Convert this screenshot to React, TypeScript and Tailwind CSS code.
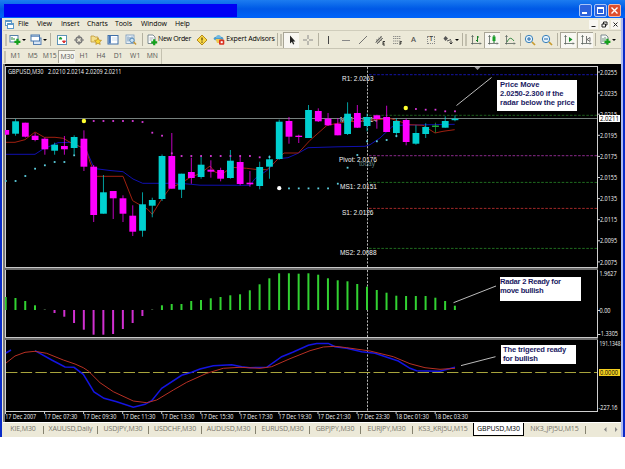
import type { ReactNode } from "react";
import clsx from "clsx";

const STEP = 9.765;
const X0 = 5.8;
const barX = (i: number) => X0 + i * STEP;

const UP = "#00d0d0";
const DOWN = "#ff00ff";

// [body top, body bottom, wick top, wick bottom, direction]
type Candle = [number, number, number, number, "u" | "d" | "x"];

const candles: Candle[] = [
  [130, 134.7, 130, 134.7, "d"],
  [121.3, 133.7, 119, 135.7, "u"],
  [122.7, 136.7, 122.7, 137.5, "d"],
  [135.7, 140, 133, 141.3, "d"],
  [138.7, 149.3, 137.5, 154.7, "d"],
  [144.7, 150.7, 142.7, 154.7, "u"],
  [146, 149.3, 136, 154.7, "d"],
  [137, 148, 135.3, 154.5, "u"],
  [138.7, 166.7, 130.3, 171, "d"],
  [166.7, 215, 165, 222, "d"],
  [192.3, 213.7, 175, 213.7, "u"],
  [191, 198.3, 191, 219, "d"],
  [198.3, 213.7, 195.3, 222, "d"],
  [215.7, 231.7, 205.3, 236, "d"],
  [204.3, 230.7, 192.3, 236.7, "u"],
  [200, 205.7, 197.7, 217.3, "u"],
  [156, 199, 154.5, 201, "u"],
  [156, 188.7, 133, 188.7, "d"],
  [173.7, 189.7, 173.7, 198, "u"],
  [172, 178, 157.7, 183.7, "d"],
  [164.7, 177, 156.3, 178.7, "u"],
  [169.7, 171.7, 160.3, 177.7, "d"],
  [170, 178.7, 167.7, 181.3, "d"],
  [160.7, 178, 150, 178.7, "u"],
  [162, 184, 156.3, 185.3, "d"],
  [182.7, 184.3, 171, 186.7, "d"],
  [167, 186, 161.7, 189.3, "u"],
  [159.3, 166.7, 155.3, 178.7, "u"],
  [121.7, 159, 119.7, 159.7, "u"],
  [121, 136.7, 117, 143.7, "d"],
  [135.7, 137, 134.7, 143, "d"],
  [110, 138, 105, 138, "u"],
  [111, 121.3, 108.3, 122, "d"],
  [118.7, 125.3, 113, 126, "d"],
  [123.7, 135.3, 118, 135.3, "d"],
  [113.7, 134, 102.3, 135, "u"],
  [113, 127.7, 105, 128, "d"],
  [117, 126, 113.7, 131.3, "u"],
  [115.3, 119, 114.7, 128.7, "d"],
  [117, 132, 105.7, 132, "d"],
  [121, 133, 118.3, 137.3, "u"],
  [120, 142, 118.7, 145.3, "d"],
  [133, 143.7, 125.3, 144.7, "u"],
  [127, 134, 123.3, 138, "u"],
  [125.5, 127, 122.7, 132.7, "x"],
  [121, 127.7, 116.3, 127.7, "u"],
  [118.7, 120.2, 115.3, 121.3, "u"],
];

const candleColor = { u: UP, d: DOWN, x: "#1fa83c" };

const radar = [
  297, 298, 301, 305.3, 309.3, 313, 316.7, 323, 329.7, 334.7, 334.7, 334, 329, 323, 316, 309.3,
  305.3, 304, 304, 301, 300, 298.3, 297, 295.3, 294.3, 290.3, 284.3, 278.3, 273.3, 273.3, 273.7,
  273.3, 274.7, 278.3, 280.3, 281.3, 284, 286.7, 290, 292.7, 295.7, 296, 296, 296, 297.7, 301, 305.7,
];

// trailing dots: [bar index, y]
const magentaDots = [
  [9, 121], [10, 121], [11, 121], [12, 121], [13, 121], [14, 122], [15, 132.7], [16, 135.7],
  [17, 153.3], [18, 156], [19, 156], [20, 156], [21, 156], [22, 156], [23, 156], [24, 156],
  [25, 156], [26, 157.3], [42, 109], [43, 109.7], [44, 109.7], [45, 111.3], [46, 111.3],
];
const cyanDots = [
  [0, 181], [1, 181], [2, 176], [3, 168.7], [4, 165.3], [5, 162], [6, 162], [7, 155.3],
  [27, 157], [29, 188.4], [30, 188.4], [31, 188.4], [32, 188.4], [33, 188.4], [34, 183.7],
  [35, 167.7], [36, 155], [37, 141.3], [38, 141.3], [39, 140], [40, 136],
];

const pivots = [
  { y: 74.7, color: "#1414a8", label: "R1: 2.0263", x: 342, w: 31.5, base: 81 },
  { y: 115.3, color: "#1c5c1c", label: "MR1: 2.0214", x: 340, w: 37, base: 121.6 },
  { y: 155.7, color: "#8c2a8c", label: "Pivot: 2.0176", x: 339, w: 38, base: 162.4 },
  { y: 182.4, color: "#1f6b1f", label: "MS1: 2.0151", x: 340, w: 37, base: 188.8 },
  { y: 208.4, color: "#a02828", label: "S1: 2.0126", x: 342, w: 31.5, base: 215 },
  { y: 248.4, color: "#1f6b1f", label: "MS2: 2.0088", x: 340, w: 36.5, base: 255.3 },
];

const prices = [
  "2.0255", "2.0235", "2.0215", "2.0195", "2.0175", "2.0155", "2.0135", "2.0115", "2.0095", "2.0075",
];

const times = [
  "17 Dec 2007", "17 Dec 07:30", "17 Dec 09:30", "17 Dec 11:30", "17 Dec 13:30", "17 Dec 15:30",
  "17 Dec 17:30", "17 Dec 19:30", "17 Dec 21:30", "17 Dec 23:30", "18 Dec 01:30", "18 Dec 03:30",
];

const Label = ({ x, y, w, children, fill = "#f4f4f4", font = "Open Sans", size = 7 }: {
  x: number; y: number; w: number; children: string; fill?: string; font?: string; size?: number;
}) => (
  <text x={x} y={y} textLength={w} lengthAdjust="spacingAndGlyphs" fill={fill} fontFamily={`"${font}", sans-serif`} fontSize={size}>
    {children}
  </text>
);

const DayLine = ({ from, to }: { from: number; to: number }) => (
  <line x1="367.5" x2="367.5" y1={from} y2={to} stroke="#b4b4b4" strokeWidth="1" strokeDasharray="2.2 1.4" />
);

const Axis = ({ from, to }: { from: number; to: number }) => (
  <path d={`M597.5 ${from}V${to}M5.5 ${from}V${to}`} stroke="#d0d0d0" strokeWidth="1" />
);

function PricePanel() {
  return (
    <svg className="block h-[203px] w-[616px] overflow-hidden" viewBox="5 64 616 203" fill="none">
      <path d="M5 66.5H598" stroke="#d0d0d0" />
      <Axis from={66} to={267} />
      <path d="M474.5 67h6l-3 3z" fill="#9a9a9a" />
      {pivots.map((p) => (
        <line key={p.label} x1="369" x2="597" y1={p.y} y2={p.y} stroke={p.color} strokeDasharray="2.6 1.5" />
      ))}
      {pivots.map((p) => (
        <Label key={p.label} x={p.x} y={p.base} w={p.w} font="Liberation Sans">{p.label}</Label>
      ))}
      <Label x={359} y={166} w={16} fill="#5f8080" font="Liberation Sans">today</Label>
      <DayLine from={67} to={267} />
      <path d="M6 118.5H597" stroke="#76807e" />
      <polyline
        stroke="#1010b0"
        points="6,154.3 35,154.3 42.7,149.3 58,142.7 70,142.3 86,149.3 94.3,168.5 110,170.5 123,171.7 133,179 142.7,183.3 180,183.3 190,184.2 200,185.2 250,185.3 255,178.7 268,169.7 278,158.7 288,157.7 298,153.3 308,147.7 338,146.8 365,146.3 370,144.7 380,138 391.7,127 397,125.3 454.7,124.3"
      />
      <polyline
        stroke="#a02010"
        points="6,142.3 15,142.3 25,139.7 35,132 44.3,137.3 55,137.3 63.3,138.3 70,142.3 86,149.3 90,162 96,176.3 123,176.3 132.7,200.7 147.7,209.3 152.3,214.3 161.3,199.7 170,188 180,183.7 191,177 200,173.7 210,166 215,172 222,174 231.7,167.3 246.7,168.3 255,169.3 267,169.7 275,162 284,153 298.3,153 310,140.3 327,125.3 345,122 391,118.7 397,120.7 410,124.7 423,125.3 435,133 443,131.3 454.7,129.7"
      />
      {candles.map(([top, bottom, hi, lo, dir], i) => (
        <g key={i} fill={candleColor[dir]}>
          <rect x={barX(i) - 0.5} y={hi} width="1" height={lo - hi} opacity="0.75" />
          <rect x={barX(i) - 3.4} y={top} width="6.8" height={bottom - top} />
        </g>
      ))}
      {magentaDots.map(([i, y]) => (
        <rect key={i} x={barX(i) - 0.9} y={y - 0.9} width="1.8" height="1.8" fill="#d838d8" />
      ))}
      {cyanDots.map(([i, y]) => (
        <rect key={i} x={barX(i) - 0.9} y={y - 0.9} width="1.8" height="1.8" fill="#5cd0e0" />
      ))}
      <circle cx={barX(8)} cy="121" r="2.2" fill="#ffff30" />
      <circle cx={barX(41) - 0.4} cy="108" r="2.2" fill="#ffff30" />
      <circle cx={barX(28)} cy="188.2" r="2.1" fill="#fff" />
      <path d="M456.5 105.5L491.5 77.5" stroke="#d0d0d0" strokeWidth="0.9" />
      <Label x={8} y={73.8} w={35.5}>GBPUSD,M30</Label>
      <Label x={48} y={73.8} w={73.5}>2.0210 2.0214 2.0209 2.0211</Label>
      {prices.map((p, i) => (
        <g key={p}>
          <path d={`M598 ${72 + i * 21.1}h2`} stroke="#d0d0d0" />
          <Label x={600} y={74.6 + i * 21.1} w={17}>{p}</Label>
        </g>
      ))}
      <rect x="599" y="115" width="21" height="7" fill="#fff" />
      <Label x={600} y={121.2} w={19} fill="#000">2.0211</Label>
    </svg>
  );
}

function RadarPanel() {
  return (
    <svg className="block h-[67px] w-[616px] overflow-hidden" viewBox="5 270 616 67" fill="none">
      <Axis from={270} to={337} />
      <DayLine from={270} to={337} />
      {radar.map((y, i) => {
        const tiny = Math.abs(y - 310) < 1;
        return (
          <rect
            key={i}
            x={barX(i) - 1.1}
            y={Math.min(y, 310)}
            width="2"
            height={Math.abs(310 - y)}
            fill={tiny ? "#4a6a4a" : y < 310 ? "#32d232" : "#d030d0"}
          />
        );
      })}
      <path d="M453.5 302.7L496 286" stroke="#d0d0d0" strokeWidth="0.9" />
      <path d="M598 310.5h2M598 334.5h2" stroke="#d0d0d0" />
      <Label x={599.5} y={276} w={17}>1.9627</Label>
      <Label x={599.5} y={312.6} w={11}>0.00</Label>
      <Label x={599} y={336.2} w={19}>-1.3305</Label>
    </svg>
  );
}

function TriggerPanel() {
  return (
    <svg className="block h-[82px] w-[616px]" viewBox="5 340 616 82" fill="none">
      <Axis from={340} to={411} />
      <path d="M5 411.5H598" stroke="#d0d0d0" />
      <DayLine from={340} to={411} />
      <path d="M6 372.5H597" stroke="#a8a43c" strokeWidth="1.1" strokeDasharray="11.4 3.3" />
      <polyline
        stroke="#1414e0"
        strokeWidth="1.5"
        points="35,350.7 51.7,360 65,367 74,367.3 83.3,374.3 94,392 104,398.3 116.7,401.7 133.3,407.3 145,404.3 151.7,400.7 161.7,388.3 181.7,375.3 191.7,372.3 200,369 213.3,365.7 231.7,364.7 241.7,366.7 250,367.7 266.7,367.3 281.7,356.7 293.3,352 308.3,345.3 316.7,343.4 328.3,343.4 335,346.7 346.7,348.3 361.7,351.7 375,353.3 390,358.3 398.3,361 410,368.3 416.7,370.7 440,371.3 455,367.3"
      />
      <path d="M6 353L11 350" stroke="#1414e0" strokeWidth="1.5" />
      <polyline
        stroke="#b83024"
        points="6,363 15,356 25,352.3 35,351.3 46.7,353.3 63.3,360 75,364 83.3,367.7 88.3,371 100,382.7 113.3,391.7 133.3,401 146.7,402.7 156.7,400 173.3,390 186.7,382.3 206.7,373.3 223.3,368.3 240,367.3 260,368.3 271.7,366.7 290,358.7 310,350.7 323.3,347 335,346.3 346.7,347.7 370,351 393.3,356.7 410,363.7 425,367.7 440,369.3 455,368.3"
      />
      <path d="M461 365.6L495.5 356.7" stroke="#d0d0d0" strokeWidth="0.9" />
      <Label x={599.5} y={346.4} w={21}>191.1348</Label>
      <rect x="599" y="369" width="21" height="7" fill="#f4d020" />
      <Label x={600} y={375.1} w={18} fill="#000">0.0000</Label>
      <Label x={598.5} y={409.6} w={19}>-227.16</Label>
      {times.map((t, i) => (
        <g key={t}>
          <path d={`M${5.5 + i * 39.06} 411v3`} stroke="#d0d0d0" />
          <Label x={5.2 + i * 39.06} y={419.2} w={i ? 33 : 31}>{t}</Label>
        </g>
      ))}
    </svg>
  );
}

const Splitter = () => <div className="h-[3px] w-[593px] border-t border-[#c8c8c8] bg-[#6a6a6a]" />;

const Note = ({ className, children }: { className: string; children: ReactNode }) => (
  <div
    className={clsx(
      "absolute bg-white font-['Liberation_Sans',sans-serif] text-[7.6px] font-bold leading-[9px] whitespace-nowrap text-[#1a1a62]",
      className
    )}
  >
    {children}
  </div>
);

// ---- toolbar ----

const Cell = ({ w, pressed, children }: { w: string; pressed?: boolean; children?: ReactNode }) => (
  <div
    className={clsx(
      "flex h-4 shrink-0 items-center justify-center",
      w,
      pressed && "border-t border-l border-[#a8a596] bg-[#f8f7f2]"
    )}
  >
    {children}
  </div>
);

const Icon = ({ children }: { children: ReactNode }) => (
  <svg className="block size-3 shrink-0" viewBox="0 0 12 12" fill="none">{children}</svg>
);

const Sep = ({ w }: { w: string }) => (
  <Cell w={w}><div className="h-[13px] w-px bg-[#b4b1a0]" /></Cell>
);
const Grip = ({ w }: { w: string }) => (
  <Cell w={w}><div className="h-3 w-0.5 bg-[#c4c1b0]" /></Cell>
);
const Drop = ({ w }: { w: string }) => (
  <Cell w={w}><svg className="block h-0.5 w-1 shrink-0" viewBox="0 0 4 2"><path d="M0 0h4L2 2z" fill="#000" /></svg></Cell>
);
const Plus = ({ x = 7, y = 7 }: { x?: number; y?: number }) => (
  <path d={`M${x + 1.2} ${y - 1.7}v6M${x - 1.8} ${y + 1.3}h6`} stroke="#14a01c" strokeWidth="2.2" />
);
const Axes = () => <path d="M2.5 1.5V10.5M1 9.5H11M1.5 3l1-1.5 1 1.5M10 8.5l1 1-1 1" stroke="#5c6460" strokeWidth="0.8" />;

function Toolbar() {
  return (
    <div className="flex h-[18px] items-center border-t border-[#d0cdbc] font-['Open_Sans',sans-serif] text-[7px] text-black">
      <Grip w="w-[5px]" />
      <Cell w="w-3.5">
        <Icon><rect x="1" y="1.5" width="8" height="6.5" fill="#fff" stroke="#5580a8" /><path d="M3 6V3M5 6V4" stroke="#288838" /><Plus x={7.2} y={6.5} /></Icon>
      </Cell>
      <Drop w="w-[3px]" />
      <Cell w="w-1" />
      <Cell w="w-3.5">
        <Icon><rect x="3.5" y="4" width="7.5" height="6.5" fill="#d6e4f4" stroke="#5880b0" /><rect x="1" y="1" width="8.5" height="6" fill="#fff" stroke="#4878b0" /><path d="M1 2.2h8.5" stroke="#4878b0" /></Icon>
      </Cell>
      <Drop w="w-[3px]" />
      <Sep w="w-2" />
      <Cell w="w-4">
        <Icon><rect x="1.5" y="1.5" width="9" height="9" fill="#fff" stroke="#5d92b8" /><path d="M3 5l1.5-2L6 5z" fill="#20a030" stroke="#20a030" /><path d="M6.5 7h3L8 9z" fill="#d83030" stroke="#d83030" /></Icon>
      </Cell>
      <Cell w="w-[18px]">
        <Icon><circle cx="6" cy="6" r="3" stroke="#777" strokeWidth="1.3" /><path d="M6 1v4M6 7v4M1 6h4M7 6h4" stroke="#777" /></Icon>
      </Cell>
      <Cell w="w-4">
        <Icon><path d="M1 2h3l1 1h3v5H1z" fill="#f4e08c" stroke="#c09838" strokeWidth="0.8" /><path d="M8 4l1.1 2.1 2.4.3-1.8 1.6.5 2.4L8 9.3l-2.2 1.1.4-2.4-1.7-1.6 2.4-.3z" fill="#f8d838" stroke="#b88820" strokeWidth="0.7" /></Icon>
      </Cell>
      <Cell w="w-[18px]">
        <Icon><rect x="1" y="1.5" width="10" height="8.5" fill="#fff" stroke="#4070a8" /><rect x="1.5" y="2" width="2.4" height="7.5" fill="#4878b8" /><path d="M5 4h5M5 6h5" stroke="#c0d4e8" strokeWidth="0.8" /></Icon>
      </Cell>
      <Cell w="w-[17px]">
        <Icon><rect x="1" y="1" width="8" height="8.5" fill="#e8f0f8" stroke="#7898b8" strokeWidth="0.8" /><path d="M3 2.5v5M5 3v4M7 2.5v2" stroke="#50789c" strokeWidth="0.8" /><circle cx="7" cy="6.3" r="2.2" fill="#cfe4f4" stroke="#5088b8" /><path d="M8.7 8l2.4 2.6" stroke="#c89838" strokeWidth="1.5" /></Icon>
      </Cell>
      <Sep w="w-[7px]" />
      <Cell w="w-[11px]">
        <Icon><path d="M2 1h5l2 2v6.5H2z" fill="#fff" stroke="#708088" strokeWidth="0.9" /><path d="M3.5 4h4M3.5 6h3" stroke="#8898a0" strokeWidth="0.8" /><Plus x={7} y={7} /></Icon>
      </Cell>
      <Cell w="w-[35px]"><span className="tracking-[-0.3px] whitespace-nowrap">New Order</span></Cell>
      <Cell w="w-5">
        <Icon><path d="M6 1l5 5-5 5-5-5z" fill="#f8d848" stroke="#b88c18" /><path d="M6 3.5v3M6 7.5v1.2" stroke="#5c4000" strokeWidth="1.2" /></Icon>
      </Cell>
      <Cell w="w-3.5">
        <Icon><ellipse cx="5.5" cy="4.5" rx="4.8" ry="2" fill="#4c9ccc" /><path d="M3 4q0-3 2.5-3T8 4z" fill="#70b8e0" /><path d="M2.5 5h6L8 9H4z" fill="#f0c850" /><rect x="6" y="5.5" width="5.3" height="5.3" rx="1" fill="#d83020" /><rect x="7.7" y="7.2" width="2" height="2" fill="#fff" /></Icon>
      </Cell>
      <Cell w="w-[49px]"><span className="tracking-[-0.16px] whitespace-nowrap">Expert Advisors</span></Cell>
      <Sep w="w-1" />
      <Grip w="w-1" />
      <Cell w="w-4" pressed>
        <Icon><path d="M4 1.5v8l1.9-1.7 1.2 2.8 1.2-.6-1.2-2.6h2.3z" fill="#222" /></Icon>
      </Cell>
      <Cell w="w-[17px]">
        <Icon><path d="M6 1v4M6 7v4M1 6h4M7 6h4" stroke="#888" /></Icon>
      </Cell>
      <Sep w="w-[5px]" />
      <Cell w="w-4"><Icon><path d="M5.5 2v8" stroke="#444" /></Icon></Cell>
      <Cell w="w-[18px]"><Icon><path d="M2 6.5h8" stroke="#888" /></Icon></Cell>
      <Cell w="w-4"><Icon><path d="M2 10l8-8" stroke="#666" strokeWidth="0.9" /></Icon></Cell>
      <Cell w="w-[18px]">
        <Icon><path d="M1.5 8.5l6-6M3 10l6-6M3 5v4M5 3.5v5M7 2v5" stroke="#555" strokeWidth="0.8" /><path d="M11 7.5H9V11h2M9 9.2h1.5" stroke="#111" strokeWidth="0.8" /></Icon>
      </Cell>
      <Cell w="w-4">
        <Icon><path d="M2 2.5h8M2 4.5h8M2 7h8M2 9.5h5" stroke="#777" strokeWidth="0.8" strokeDasharray="1.3 .6" /><path d="M9 11V7.7h2M9 9.2h1.5" stroke="#111" strokeWidth="0.8" /></Icon>
      </Cell>
      <Cell w="w-[17px]"><span className="text-[7.5px] font-semibold text-[#555]">A</span></Cell>
      <Cell w="w-[18px]">
        <div className="flex size-2 items-center justify-center border border-dotted border-[#888] text-[6.5px] leading-none font-semibold text-[#444]">T</div>
      </Cell>
      <Cell w="w-[15px]">
        <Icon><path d="M3.5 2L6 4.5 3.5 7 1.5 4.5z" fill="#555" /><path d="M5 7l4-1.5" stroke="#555" /><path d="M9 6.5v3.5M7.5 8.5L9 10l1.5-1.5" stroke="#333" /></Icon>
      </Cell>
      <Drop w="w-[3px]" />
      <Cell w="w-[3px]" />
      <Sep w="w-[3px]" />
      <Grip w="w-1" />
      <Cell w="w-4">
        <Icon><Axes /><path d="M7.5 2v6M6 6.5h1.5M7.5 3H9" stroke="#188028" /></Icon>
      </Cell>
      <Cell w="w-4" pressed>
        <Icon><Axes /><path d="M7 1v8" stroke="#107020" /><rect x="5.5" y="2.5" width="3" height="4.5" fill="#18a028" /></Icon>
      </Cell>
      <Cell w="w-[19px]">
        <Icon><Axes /><path d="M3 8q3-7 7-1" stroke="#3c8c48" /></Icon>
      </Cell>
      <Sep w="w-0.5" />
      <Cell w="w-[18px]">
        <Icon><circle cx="5" cy="5" r="3.7" fill="#e4f2fc" stroke="#3880b8" /><path d="M5 3v4M3 5h4" stroke="#2468a8" /><path d="M8 8l3 3" stroke="#c89c30" strokeWidth="1.7" /></Icon>
      </Cell>
      <Cell w="w-4">
        <Icon><circle cx="5" cy="5" r="3.7" fill="#e4f2fc" stroke="#3880b8" /><path d="M3 5h4" stroke="#2468a8" /><path d="M8 8l3 3" stroke="#c89c30" strokeWidth="1.7" /></Icon>
      </Cell>
      <Sep w="w-[5px]" />
      <Cell w="w-4" pressed>
        <Icon><Axes /><path d="M6 3l3.5 2.5L6 8z" fill="#189028" /></Icon>
      </Cell>
      <Cell w="w-px" />
      <Cell w="w-4" pressed>
        <Icon><Axes /><path d="M6.5 2v7M10 3.5v4L7 5.5z" stroke="#555" strokeWidth="0.8" /></Icon>
      </Cell>
      <Sep w="w-[5px]" />
      <Cell w="w-3.5">
        <Icon><path d="M2 1h5l2 2v6.5H2z" fill="#f4f8f4" stroke="#708088" strokeWidth="0.9" /><path d="M4 4v4M6 3v4" stroke="#507860" strokeWidth="0.8" /><Plus x={7.2} y={6.5} /></Icon>
      </Cell>
      <Drop w="w-1" />
    </div>
  );
}

function TitleBar() {
  return (
    <div className="flex h-[18px] items-center justify-between bg-linear-to-b from-[#1c7cf0] via-[#0058e6] to-[#0064fa]">
      <div className="mt-0.5 ml-1 h-[13px] w-[233px] bg-[#0000f4]" />
      <div className="mt-0.5 mr-1 flex gap-[1.5px]">
        <div className="flex h-[13px] w-[13px] items-end rounded-xs border border-[#a8c4f8] bg-[#2c62dc] p-0.5">
          <div className="h-0.5 w-[5px] bg-white" />
        </div>
        <div className="h-[13px] w-[13px] rounded-xs border border-[#a8c4f8] bg-[#2c62dc] p-0.5">
          <div className="h-[7px] w-[7px] border border-t-2 border-white" />
        </div>
        <div className="flex h-[13px] w-[13px] items-center justify-center rounded-xs border border-[#f0b8a8] bg-[#de4e2c]">
          <svg className="block size-[7px]" viewBox="0 0 7 7"><path d="M.5.5l6 6M6.5.5l-6 6" stroke="#fff" strokeWidth="1.4" /></svg>
        </div>
      </div>
    </div>
  );
}

const menus = [
  ["File", "w-[19px]"], ["View", "w-6"], ["Insert", "w-[26px]"], ["Charts", "w-7"],
  ["Tools", "w-[26px]"], ["Window", "w-[34px]"], ["Help", "w-4"],
];

function MenuBar() {
  return (
    <div className="flex h-3 items-center font-['Open_Sans',sans-serif] text-[7px] text-black">
      <svg className="mr-1 ml-0.5 block size-[9px]" viewBox="0 0 9 9" fill="none">
        <rect x="0.5" y="0.5" width="6" height="5" fill="#fff" stroke="#5c98c8" />
        <rect x="2.5" y="3.5" width="6" height="5" fill="#fff" stroke="#5c98c8" />
        <path d="M2.5 4.5h6M0.5 1.5h6" stroke="#5c98c8" />
      </svg>
      {menus.map(([name, w]) => (
        <span key={name} className={clsx("shrink-0 tracking-[-0.1px] whitespace-nowrap", w)}>{name}</span>
      ))}
      <svg className="mr-px ml-auto block h-[9px] w-[31px]" viewBox="0 0 31 9" fill="none">
        <path d="M0 0h9v9H0zM11 0h9v9h-9zM22 0h9v9h-9z" fill="#f8f7f2" />
        <path d="M2.5 6.5h4M13 4h3.5v3H13zM14.5 4V2H18v3h-1.5M24.5 2.5l4 4M28.5 2.5l-4 4" stroke="#222" />
      </svg>
    </div>
  );
}

const frames = ["M1", "M5", "M15", "M30", "H1", "H4", "D1", "W1", "MN"];

function TimeframeBar() {
  return (
    <div className="flex h-4 items-center border-t border-[#c8c5b4] font-['Open_Sans',sans-serif] text-[6.8px] text-[#555]">
      <Grip w="w-[4px]" />
      {frames.map((f) => (
        <div
          key={f}
          className={clsx(
            "flex h-[13px] w-[17.1px] shrink-0 items-center justify-center",
            f === "M30" && "border-t border-l border-[#a8a596] bg-[#f6f5ee]"
          )}
        >
          {f}
        </div>
      ))}
      <div className="h-[15px] w-px bg-[#c4c1b0]" />
    </div>
  );
}

const tabs = [
  ["KIE,M30", "w-[41px]"], ["XAUUSD,Daily", "w-[54px]"], ["USDJPY,M30", "w-[51px]"],
  ["USDCHF,M30", "w-[53px]"], ["AUDUSD,M30", "w-[54px]"], ["EURUSD,M30", "w-[54px]"],
  ["GBPJPY,M30", "w-[51px]"], ["EURJPY,M30", "w-[52px]"], ["KS3_KRJ5U,M15", "w-[60px]"],
  ["GBPUSD,M30", "w-[51px]"], ["NK3_JPJ5U,M15", "w-[62px]"],
];

function TabBar() {
  return (
    <div className="flex h-[15px] items-start border-t border-white bg-[#ece9d8] font-['Open_Sans',sans-serif] text-[7px] tracking-[-0.12px] text-[#77746a]">
      {tabs.map(([name, w], i) => {
        const active = name === "GBPUSD,M30";
        return (
          <div
            key={name}
            className={clsx(
              "flex h-[13px] shrink-0 items-center justify-center whitespace-nowrap",
              w,
              active && "border-x border-b border-black bg-white text-black"
            )}
          >
            <span className="flex-1 text-center">{name}</span>
            {!active && i !== 8 && <div className="h-2 w-px bg-[#85826f]" />}
          </div>
        );
      })}
      <svg className="mt-1 mr-[3px] ml-auto block h-[5px] w-3.5" viewBox="0 0 14 5">
        <path d="M2.5 0v5L0 2.5zM11 0v5l2.5-2.5z" fill="#888" />
      </svg>
    </div>
  );
}

export default function App() {
  return (
    <div className="h-[469px] w-[625px] overflow-hidden bg-white">
      <div className="h-[437px] w-[625px] overflow-hidden bg-[#0a2cc8]">
        <TitleBar />
        <div className="ml-0.5 h-[419px] w-[621px] border-r-2 border-[#b0bcf0] bg-[#ece9d8] pl-px">
          <MenuBar />
          <Toolbar />
          <TimeframeBar />
          <div className="relative h-[358px] w-[618px] border-l-2 border-[#77777a] bg-black">
            <PricePanel />
            <Splitter />
            <RadarPanel />
            <Splitter />
            <TriggerPanel />
            <Note className="top-4 left-[492px] h-[31px] w-20 pl-[3px] tracking-[-0.08px]">
              Price Move<br />2.0250-2.300 if the<br />radar below the price
            </Note>
            <Note className="top-[213px] left-[495px] h-6 w-[81px] tracking-[-0.25px]">
              Radar 2 Ready for<br />move bullish
            </Note>
            <Note className="top-[281px] left-[496px] h-[19px] w-[75px] pl-0.5 tracking-[-0.18px]">
              The trigered ready<br />for bullish
            </Note>
          </div>
          <TabBar />
        </div>
      </div>
    </div>
  );
}
